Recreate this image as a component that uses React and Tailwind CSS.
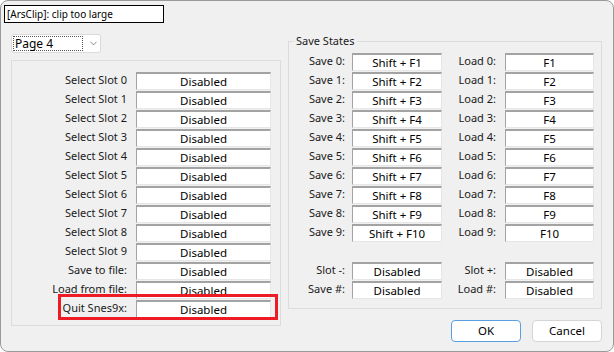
import { ChevronDown } from 'lucide-react';

const slots = [
  'Select Slot 0', 'Select Slot 1', 'Select Slot 2', 'Select Slot 3', 'Select Slot 4',
  'Select Slot 5', 'Select Slot 6', 'Select Slot 7', 'Select Slot 8', 'Select Slot 9',
  'Save to file:', 'Load from file:',
];

const states = Array.from({ length: 10 }, (_, i) => ({
  save: `Save ${i}:`, saveKey: `Shift + F${i + 1}`,
  load: `Load ${i}:`, loadKey: `F${i + 1}`,
}));

function KeyBox({ value, width }) {
  return (
    <div className={`${width} h-[18px] bg-white border border-t-2 border-t-[#a3a3a3] border-l-[#a3a3a3] border-r-[#e6e6e6] border-b-[#e6e6e6] flex items-center justify-center text-[11.5px] leading-none text-black`}>
      {value}
    </div>
  );
}

function StateRow({ a, aKey, b, bKey }) {
  return (
    <div className="flex items-center h-[18px]">
      <span className="w-[56px] text-right -mt-[2px]">{a}</span>
      <div className="ml-[7px]"><KeyBox value={aKey} width="w-[90px]" /></div>
      <span className="w-[54px] text-right -mt-[2px]">{b}</span>
      <div className="ml-[9px]"><KeyBox value={bKey} width="w-[89px]" /></div>
    </div>
  );
}

export default function App() {
  return (
    <div className="w-[614px] h-[352px] bg-[#f0f0f0] border border-[#9a9a9a] rounded-lg overflow-hidden text-[11px] text-[#1a1a1a] font-['Noto_Sans',sans-serif]">
      <div className="ml-[3px] mt-[4px] w-[160px] h-[18px] bg-white border border-black text-[10px] leading-[16px] px-[2px] text-black">
        [ArsClip]: clip too large
      </div>

      <div className="flex">
        {/* left column */}
        <div className="ml-[10px] w-[270px]">
          <div className="mt-[11px] w-[90px] h-[19px] bg-white border border-[#dadada] rounded-[3px] flex items-center pl-[1px]">
            <div className="w-[70px] h-[15px] border border-dotted border-[#555] flex items-center pl-[1px] text-black text-[12px] leading-none">Page 4</div>
            <ChevronDown className="ml-[5px] w-[11px] h-[11px] text-[#555]" strokeWidth={1.5} />
          </div>

          <div className="relative mt-[7px] h-[266px] border border-[#dcdcdc] pt-[11px]">
            <div className="flex flex-col gap-[1px]">
              {slots.map(s => (
                <div key={s} className="flex items-center h-[18px]">
                  <span className="w-[115px] text-right -mt-[2px]">{s}</span>
                  <div className="ml-[9px]"><KeyBox value="Disabled" width="w-[135px]" /></div>
                </div>
              ))}
              <div className="flex items-center h-[18px]">
                <span className="w-[115px] text-right -mt-[2px]">Quit Snes9x:</span>
                <div className="ml-[9px]"><KeyBox value="Disabled" width="w-[135px]" /></div>
              </div>
            </div>
            <div className="absolute left-[46px] top-[233px] w-[220px] h-[26px] border-[3px] border-[#ed1c24]" />
          </div>
        </div>

        {/* right column */}
        <div className="ml-[7px] w-[314px]">
          <div className="mt-[18px] h-[268px] border border-[#dcdcdc]">
            <span className="block w-fit -mt-[9px] ml-[5px] px-[2px] h-[16px] leading-[16px] bg-[#f0f0f0]">Save States</span>
            <div className="pt-[4px] flex flex-col gap-[1px]">
              {states.map(s => (
                <StateRow key={s.save} a={s.save} aKey={s.saveKey} b={s.load} bKey={s.loadKey} />
              ))}
            </div>
            <div className="mt-[20px] flex flex-col gap-[1px]">
              <StateRow a="Slot -:" aKey="Disabled" b="Slot +:" bKey="Disabled" />
              <StateRow a="Save #:" aKey="Disabled" b="Load #:" bKey="Disabled" />
            </div>
          </div>

          <div className="mt-[11px] flex justify-end gap-[11px]">
            <button className="w-[70px] h-[22px] bg-white border border-[#5aa0e0] rounded-[4px] text-black text-[11.5px] leading-none">OK</button>
            <button className="w-[70px] h-[22px] bg-white border border-[#d4d4d4] rounded-[4px] text-black text-[11.5px] leading-none">Cancel</button>
          </div>
        </div>
      </div>
    </div>
  );
}
